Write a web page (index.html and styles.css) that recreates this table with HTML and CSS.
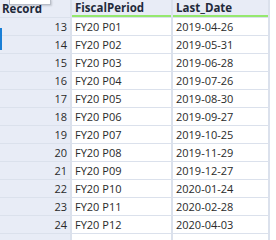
FILE: index.html
```html
<!DOCTYPE html>
<html lang="en">
<head>
    <meta charset="UTF-8">
    <title>Results grid</title>
    <link rel="stylesheet" href="styles.css">
</head>
<body>
    <div class="grid">
        <div class="head rec">Record</div>
        <div class="head col">FiscalPeriod</div>
        <div class="head col">Last_Date</div>

        <div class="rec num">13</div><div class="cell">FY20 P01</div><div class="cell">2019-04-26</div>
        <div class="rec num">14</div><div class="cell">FY20 P02</div><div class="cell">2019-05-31</div>
        <div class="rec num">15</div><div class="cell">FY20 P03</div><div class="cell">2019-06-28</div>
        <div class="rec num">16</div><div class="cell">FY20 P04</div><div class="cell">2019-07-26</div>
        <div class="rec num">17</div><div class="cell">FY20 P05</div><div class="cell">2019-08-30</div>
        <div class="rec num">18</div><div class="cell">FY20 P06</div><div class="cell">2019-09-27</div>
        <div class="rec num">19</div><div class="cell">FY20 P07</div><div class="cell">2019-10-25</div>
        <div class="rec num">20</div><div class="cell">FY20 P08</div><div class="cell">2019-11-29</div>
        <div class="rec num">21</div><div class="cell">FY20 P09</div><div class="cell">2019-12-27</div>
        <div class="rec num">22</div><div class="cell">FY20 P10</div><div class="cell">2020-01-24</div>
        <div class="rec num">23</div><div class="cell">FY20 P11</div><div class="cell">2020-02-28</div>
        <div class="rec num">24</div><div class="cell">FY20 P12</div><div class="cell">2020-04-03</div>
        <div class="rec"></div><div class="cell"></div><div class="cell"></div>
    </div>
    <div class="popup"></div>
    <div class="marker"></div>
</body>
</html>
```

FILE: styles.css
```css
html, body {
    margin: 0;
    height: 240px;
    overflow: hidden;
    background: #ffffff;
}
body {
    position: relative;
    font-family: "Open Sans", "Noto Sans", sans-serif;
    font-size: 11px;
    color: #2a2a2a;
}
.grid {
    display: grid;
    grid-template-columns: 70px 99px 95px;
    grid-auto-rows: 17px;
    column-gap: 2px;
    row-gap: 1px;
    width: 270px;
    background: #dbe1ec;
    border-right: 2px solid #dbe1ec;
    box-sizing: border-box;
}
.head {
    background: #e8ecf6;
    font-weight: bold;
    font-size: 11.5px;
    line-height: 15px;
    height: 15px;
    padding-left: 3px;
    color: #1f2a3a;
}
.head.col {
    border-bottom: 2px solid #95e86e;
}
.head.rec {
    height: 17px;
    padding-left: 2px;
}
.rec {
    background: #e8ecf6;
    line-height: 17px;
}
.num {
    text-align: right;
    padding-right: 3px;
}
.cell {
    background: #ffffff;
    line-height: 17px;
    padding-left: 3px;
}
.popup {
    position: absolute;
    left: 9px;
    top: -1px;
    width: 40px;
    height: 4px;
    background: #ffffff;
    border: 1px solid #b9bec8;
    box-shadow: 1px 1px 2px rgba(0, 0, 0, 0.15);
}
.marker {
    position: absolute;
    left: 0;
    top: 28px;
    width: 2px;
    height: 22px;
    background: #1a7fd6;
}
```
